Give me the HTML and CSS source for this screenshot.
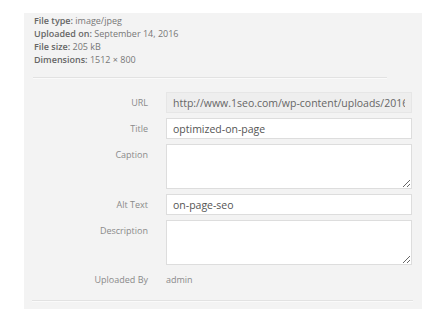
FILE: index.html
```html
<!DOCTYPE html>
<html lang="en">
<head>
    <meta charset="UTF-8">
    <meta name="viewport" content="width=device-width, initial-scale=1.0">
    <title>Attachment Details</title>
    <link rel="stylesheet" href="styles.css">
</head>
<body>
    <div class="attachment-panel">
        <!-- File details -->
        <div class="details">
            <div><strong>File type:</strong> image/jpeg</div>
            <div><strong>Uploaded on:</strong> September 14, 2016</div>
            <div><strong>File size:</strong> 205 kB</div>
            <div><strong>Dimensions:</strong> 1512 × 800</div>
        </div>
        <div class="divider top"></div>

        <!-- Settings -->
        <div class="settings">
            <label class="setting-label">URL</label>
            <input type="text" class="field readonly" value="http://www.1seo.com/wp-content/uploads/2016/09/optimized-on-page.jpg" readonly>

            <label class="setting-label">Title</label>
            <input type="text" class="field" value="optimized-on-page">

            <label class="setting-label">Caption</label>
            <textarea class="field area"></textarea>

            <label class="setting-label">Alt Text</label>
            <input type="text" class="field" value="on-page-seo">

            <label class="setting-label">Description</label>
            <textarea class="field area"></textarea>

            <span class="setting-label plain">Uploaded By</span>
            <span class="setting-value">admin</span>
        </div>
        <div class="divider bottom"></div>
    </div>
</body>
</html>
```

FILE: styles.css
```css
body {
    margin: 0;
    padding: 13px 21px 13px 24px;
    background-color: #ffffff;
    font-family: 'Open Sans', 'Noto Sans', sans-serif;
}

.attachment-panel {
    background-color: #f3f3f3;
    width: 398px;
    height: 296px;
    padding-top: 1px;
    box-sizing: border-box;
}

.details {
    padding-left: 10px;
    font-size: 9px;
    line-height: 13px;
    color: #777777;
}

.details strong {
    color: #666666;
    font-weight: 600;
}

.divider {
    height: 1px;
    background-color: #e2e2e2;
    box-shadow: 0 1px 0 #fafafa;
}

.divider.top {
    margin: 11px 0 14px 9px;
    width: 354px;
}

.divider.bottom {
    margin: 11px 0 0 8px;
    width: 381px;
}

.settings {
    display: grid;
    grid-template-columns: 124px 246px;
    column-gap: 18px;
    row-gap: 5px;
    align-items: start;
}

.setting-label {
    text-align: right;
    font-size: 9px;
    line-height: 21px;
    color: #8a8a8a;
}

.setting-label.plain {
    line-height: 18px;
    margin-top: 1px;
}

.setting-value {
    font-size: 9px;
    line-height: 18px;
    margin-top: 1px;
    color: #8a8a8a;
}

.field {
    box-sizing: border-box;
    width: 246px;
    height: 21px;
    margin: 0;
    padding: 0 6px;
    border: 1px solid #dddddd;
    background-color: #ffffff;
    font-family: 'Open Sans', 'Noto Sans', sans-serif;
    font-size: 10.5px;
    color: #555555;
    outline: none;
}

.field.readonly {
    background-color: #eeeeee;
    border-color: #e6e6e6;
    color: #666666;
}

.field.area {
    height: 45px;
    resize: vertical;
    display: block;
}
```
